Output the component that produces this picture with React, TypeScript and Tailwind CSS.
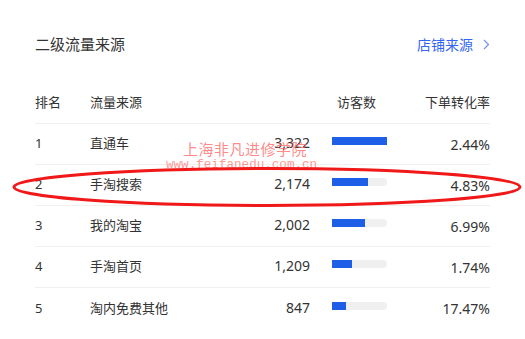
import React from 'react';

const rows = [
  { rank: 1, name: '直通车', uv: '3,322', bar: 55, rate: '2.44%' },
  { rank: 2, name: '手淘搜索', uv: '2,174', bar: 36, rate: '4.83%' },
  { rank: 3, name: '我的淘宝', uv: '2,002', bar: 33, rate: '6.99%' },
  { rank: 4, name: '手淘首页', uv: '1,209', bar: 20, rate: '1.74%' },
  { rank: 5, name: '淘内免费其他', uv: '847', bar: 14, rate: '17.47%' },
];

const App = () => {
  return (
    <div
      className="relative w-[525px] h-[339px] bg-white overflow-hidden text-[#333]"
      style={{ fontFamily: '"Noto Sans", "Noto Sans CJK SC", sans-serif' }}
    >
      <div className="px-[35px] pt-[33px]">
        <div className="flex h-[22px] items-center justify-between">
          <h3 className="text-[15px] font-normal">二级流量来源</h3>
          <a className="flex items-center gap-[10px] text-[14px] text-[#3366f0]">
            店铺来源
            <svg width="7" height="11" viewBox="0 0 7 11" fill="none">
              <path d="M1 1l4.5 4.5L1 10" stroke="#7d93e8" strokeWidth="1.3" />
            </svg>
          </a>
        </div>

        <div className="mt-[28px] flex h-[41px] items-center border-b border-[#f0f0f0] text-[13px]">
          <div className="w-[55px]">排名</div>
          <div className="flex-1">流量来源</div>
          <div className="w-[82px]" />
          <div className="w-[55px] pl-[5px]">访客数</div>
          <div className="w-[103px] text-right">下单转化率</div>
        </div>

        {rows.map((r, i) => (
          <div
            key={r.rank}
            className={`flex h-[41px] items-center text-[13px] ${i < rows.length - 1 ? 'border-b border-[#f0f0f0]' : ''}`}
          >
            <div className="w-[55px]">{r.rank}</div>
            <div className="flex-1">{r.name}</div>
            <div className="w-[60px] pb-[3px] text-right text-[14px]">{r.uv}</div>
            <div className="ml-[22px] mb-[6px] h-[8px] w-[55px] rounded-r-[4px] bg-[#f0f0f0]">
              <div className="h-full bg-[#1f5fe8]" style={{ width: r.bar }} />
            </div>
            <div className="w-[103px] text-right text-[14px]">{r.rate}</div>
          </div>
        ))}
      </div>

      {/* watermark */}
      <div className="pointer-events-none absolute left-[183px] top-[139px] text-[15px] leading-[20px] tracking-[0.5px] text-[#ff6a6a]/80">
        上海非凡进修学院
      </div>
      <div
        className="pointer-events-none absolute left-[166px] top-[158px] text-[12.6px] leading-[14px] text-[#ff6a6a]/70"
        style={{ fontFamily: '"Liberation Mono", monospace' }}
      >
        www.feifanedu.com.cn
      </div>

      {/* hand-drawn ellipse */}
      <svg className="pointer-events-none absolute left-0 top-0" width="525" height="339">
        <ellipse cx="267" cy="187" rx="253" ry="18.5" fill="none" stroke="#f01818" strokeWidth="3" />
      </svg>
    </div>
  );
};

export default App;
